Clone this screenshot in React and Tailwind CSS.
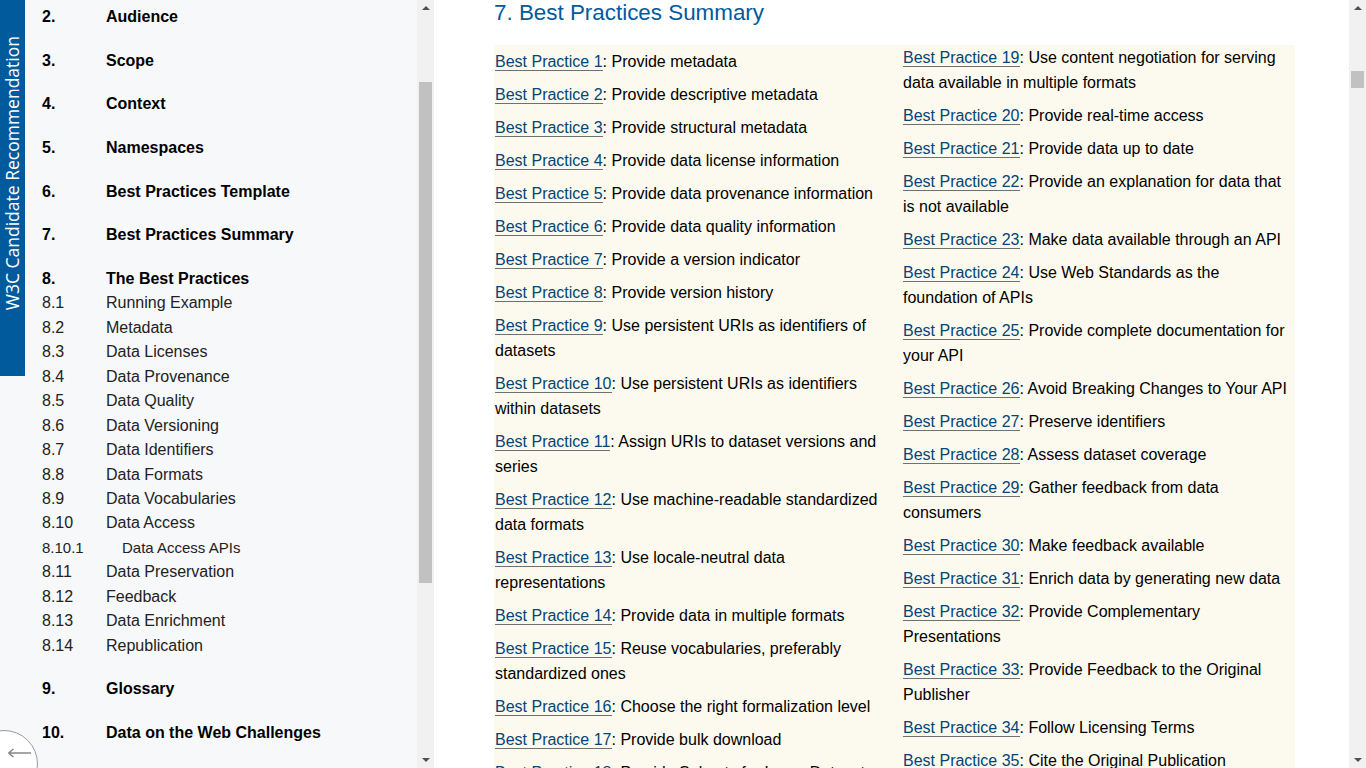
import React from "react";

const toc = [
  { n: "2.", t: "Audience", top: true },
  { n: "3.", t: "Scope", top: true },
  { n: "4.", t: "Context", top: true },
  { n: "5.", t: "Namespaces", top: true },
  { n: "6.", t: "Best Practices Template", top: true },
  { n: "7.", t: "Best Practices Summary", top: true },
  { n: "8.", t: "The Best Practices", top: true },
  { n: "8.1", t: "Running Example" },
  { n: "8.2", t: "Metadata" },
  { n: "8.3", t: "Data Licenses" },
  { n: "8.4", t: "Data Provenance" },
  { n: "8.5", t: "Data Quality" },
  { n: "8.6", t: "Data Versioning" },
  { n: "8.7", t: "Data Identifiers" },
  { n: "8.8", t: "Data Formats" },
  { n: "8.9", t: "Data Vocabularies" },
  { n: "8.10", t: "Data Access" },
  { n: "8.10.1", t: "Data Access APIs", sub: true },
  { n: "8.11", t: "Data Preservation" },
  { n: "8.12", t: "Feedback" },
  { n: "8.13", t: "Data Enrichment" },
  { n: "8.14", t: "Republication" },
  { n: "9.", t: "Glossary", top: true },
  { n: "10.", t: "Data on the Web Challenges", top: true },
];

const col1 = [
  [1, "Provide metadata"],
  [2, "Provide descriptive metadata"],
  [3, "Provide structural metadata"],
  [4, "Provide data license information"],
  [5, "Provide data provenance information"],
  [6, "Provide data quality information"],
  [7, "Provide a version indicator"],
  [8, "Provide version history"],
  [9, "Use persistent URIs as identifiers of", "datasets"],
  [10, "Use persistent URIs as identifiers", "within datasets"],
  [11, "Assign URIs to dataset versions and", "series"],
  [12, "Use machine-readable standardized", "data formats"],
  [13, "Use locale-neutral data", "representations"],
  [14, "Provide data in multiple formats"],
  [15, "Reuse vocabularies, preferably", "standardized ones"],
  [16, "Choose the right formalization level"],
  [17, "Provide bulk download"],
  [18, "Provide Subsets for Large Datasets"],
];

const col2 = [
  [19, "Use content negotiation for serving", "data available in multiple formats"],
  [20, "Provide real-time access"],
  [21, "Provide data up to date"],
  [22, "Provide an explanation for data that", "is not available"],
  [23, "Make data available through an API"],
  [24, "Use Web Standards as the", "foundation of APIs"],
  [25, "Provide complete documentation for", "your API"],
  [26, "Avoid Breaking Changes to Your API"],
  [27, "Preserve identifiers"],
  [28, "Assess dataset coverage"],
  [29, "Gather feedback from data", "consumers"],
  [30, "Make feedback available"],
  [31, "Enrich data by generating new data"],
  [32, "Provide Complementary", "Presentations"],
  [33, "Provide Feedback to the Original", "Publisher"],
  [34, "Follow Licensing Terms"],
  [35, "Cite the Original Publication"],
  [36, "Provide Feedback to the Original"],
];

function Arrow({ down }) {
  return down ? (
    <div className="w-0 h-0 border-x-[4px] border-x-transparent border-t-[4px] border-t-[#505050]" />
  ) : (
    <div className="w-0 h-0 border-x-[4px] border-x-transparent border-b-[4px] border-b-[#505050]" />
  );
}

function Item({ it }) {
  const [n, a, b] = it;
  return (
    <li className="leading-[25px] whitespace-pre text-black">
      <a href="#" className="text-[#034575] border-b border-[#707070] no-underline">
        Best Practice {n}
      </a>
      {": " + a}
      {b ? "\n" + b : null}
    </li>
  );
}

export default function App() {
  return (
    <div className="relative w-[1366px] h-[768px] overflow-hidden flex bg-white [font-family:'Liberation_Sans',Arial,sans-serif] text-[16px]">
      {/* Sidebar */}
      <div className="w-[434px] h-full flex shrink-0">
        <div className="w-[417px] h-full bg-[#f7f8f9] overflow-hidden">
          <ul className="pt-[5px] pl-[42px]">
            {toc.map((e, i) =>
              e.top ? (
                <li
                  key={i}
                  className={
                    "flex leading-[24.43px] font-bold text-black " +
                    (i === 0 ? "" : "mt-[19.24px]")
                  }
                >
                  <span className="w-[64px]">{e.n}</span>
                  <span>{e.t}</span>
                </li>
              ) : e.sub ? (
                <li key={i} className="flex leading-[24.43px] text-[15px] text-[#222]">
                  <span className="w-[80px]">{e.n}</span>
                  <span>{e.t}</span>
                </li>
              ) : (
                <li key={i} className="flex leading-[24.43px] text-[#222]">
                  <span className="w-[64px]">{e.n}</span>
                  <span>{e.t}</span>
                </li>
              )
            )}
          </ul>
        </div>
        <div className="relative w-[17px] h-full bg-[#f1f1f1] flex flex-col items-center justify-between py-[6px]">
          <Arrow />
          <div className="absolute left-[2px] top-[82px] w-[13px] h-[501px] bg-[#c1c1c1]" />
          <Arrow down />
        </div>
      </div>

      {/* Main */}
      <div className="flex-1 h-full flex">
        <div className="flex-1 h-full overflow-hidden pl-[60px] pr-[54px]">
          <h2 className="text-[22.4px] leading-[26px] text-[#005a9c] font-normal">
            7. Best Practices Summary
          </h2>
          <div className="mt-[19px] bg-[#fcfaee] grid grid-cols-2 gap-x-[16px] pl-[1px]">
            <ul className="flex flex-col gap-[8px] pt-[4px]">
              {col1.map((it) => (
                <Item key={it[0]} it={it} />
              ))}
            </ul>
            <ul className="flex flex-col gap-[8px] pt-[0px]">
              {col2.map((it) => (
                <Item key={it[0]} it={it} />
              ))}
            </ul>
          </div>
        </div>
        <div className="relative w-[17px] h-full bg-[#f1f1f1] flex flex-col items-center justify-between py-[6px] shrink-0">
          <Arrow />
          <div className="absolute left-[2px] top-[71px] w-[13px] h-[17px] bg-[#c1c1c1]" />
          <Arrow down />
        </div>
      </div>

      {/* W3C banner */}
      <div className="absolute left-0 top-0 w-[25px] h-[376px] bg-[#005a9c] flex flex-col items-center justify-end pb-[66px]">
        <span className="[writing-mode:vertical-rl] rotate-180 text-white text-[17.5px] leading-[25px] [font-family:'Open_Sans',sans-serif] whitespace-nowrap">
          W3C Candidate Recommendation
        </span>
      </div>

      {/* back to toc */}
      <div className="absolute left-[-30px] top-[730px] w-[68px] h-[68px] rounded-full border border-[#9a9a9a] bg-white" />
      <svg className="absolute left-[7px] top-[747px]" width="25" height="12" viewBox="0 0 25 12">
        <path d="M1.5 6 H24 M1.5 6 L6.5 2 M1.5 6 L6.5 10" stroke="#888" strokeWidth="1.6" fill="none" />
      </svg>
    </div>
  );
}
